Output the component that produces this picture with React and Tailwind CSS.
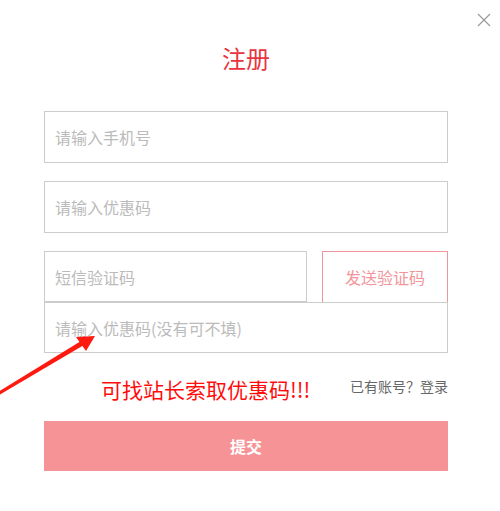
export default function App() {
    return (
        <div
            className="relative w-full h-[511px] bg-white overflow-hidden"
            style={{ fontFamily: '"Noto Sans CJK SC", "Noto Sans", sans-serif' }}
        >
            <button className="absolute top-[13px] left-[477px] w-[14px] h-[14px]" aria-label="close">
                <svg width="14" height="14" viewBox="0 0 14 14">
                    <path d="M1 1 L13 13 M13 1 L1 13" stroke="#9a9a9a" strokeWidth="1.2" fill="none" />
                </svg>
            </button>

            <div className="ml-[44px] w-[404px] pt-[46px] flex flex-col">
                <div className="text-center text-[24px] leading-[24px] text-[#e8353f]">注册</div>

                <input
                    className="mt-[41px] h-[52px] border border-[#cccccc] px-[10px] text-[16px] text-[#333] outline-none placeholder:text-[#bbbbbb]"
                    placeholder="请输入手机号"
                />
                <input
                    className="mt-[18px] h-[52px] border border-[#cccccc] px-[10px] text-[16px] text-[#333] outline-none placeholder:text-[#bbbbbb]"
                    placeholder="请输入优惠码"
                />
                <div className="mt-[18px] flex items-start gap-[15px]">
                    <input
                        className="w-[263px] h-[51px] border border-[#cccccc] px-[10px] text-[16px] text-[#333] outline-none placeholder:text-[#bbbbbb]"
                        placeholder="短信验证码"
                    />
                    <button className="w-[126px] h-[52px] border border-[#f2959b] text-[16px] text-[#f2959b] bg-white">
                        发送验证码
                    </button>
                </div>
                <input
                    className="-mt-[1px] h-[51px] border border-[#cccccc] px-[10px] text-[16px] text-[#333] outline-none placeholder:text-[#bbbbbb]"
                    placeholder="请输入优惠码(没有可不填)"
                />

                <div className="mt-[22px] h-[28px] flex items-center pl-[57px]">
                    <span className="text-[21px] leading-[28px] text-[#ff0d0d]">可找站长索取优惠码!!!</span>
                    <span className="ml-auto mb-[5px] text-[14px] text-[#666666]">
                        已有账号？<a className="text-[#666666] cursor-pointer">登录</a>
                    </span>
                </div>

                <button className="mt-[18px] h-[50px] bg-[#f59397] text-white text-[16px] font-bold">提交</button>
            </div>

            <svg className="absolute left-0 top-0 pointer-events-none" width="500" height="511">
                <polygon points="-2,392 -1,395 84,345 81,341" fill="#ff1a10" />
                <polygon points="95,336 76,337 86,351" fill="#ff1a10" />
            </svg>
        </div>
    );
}
